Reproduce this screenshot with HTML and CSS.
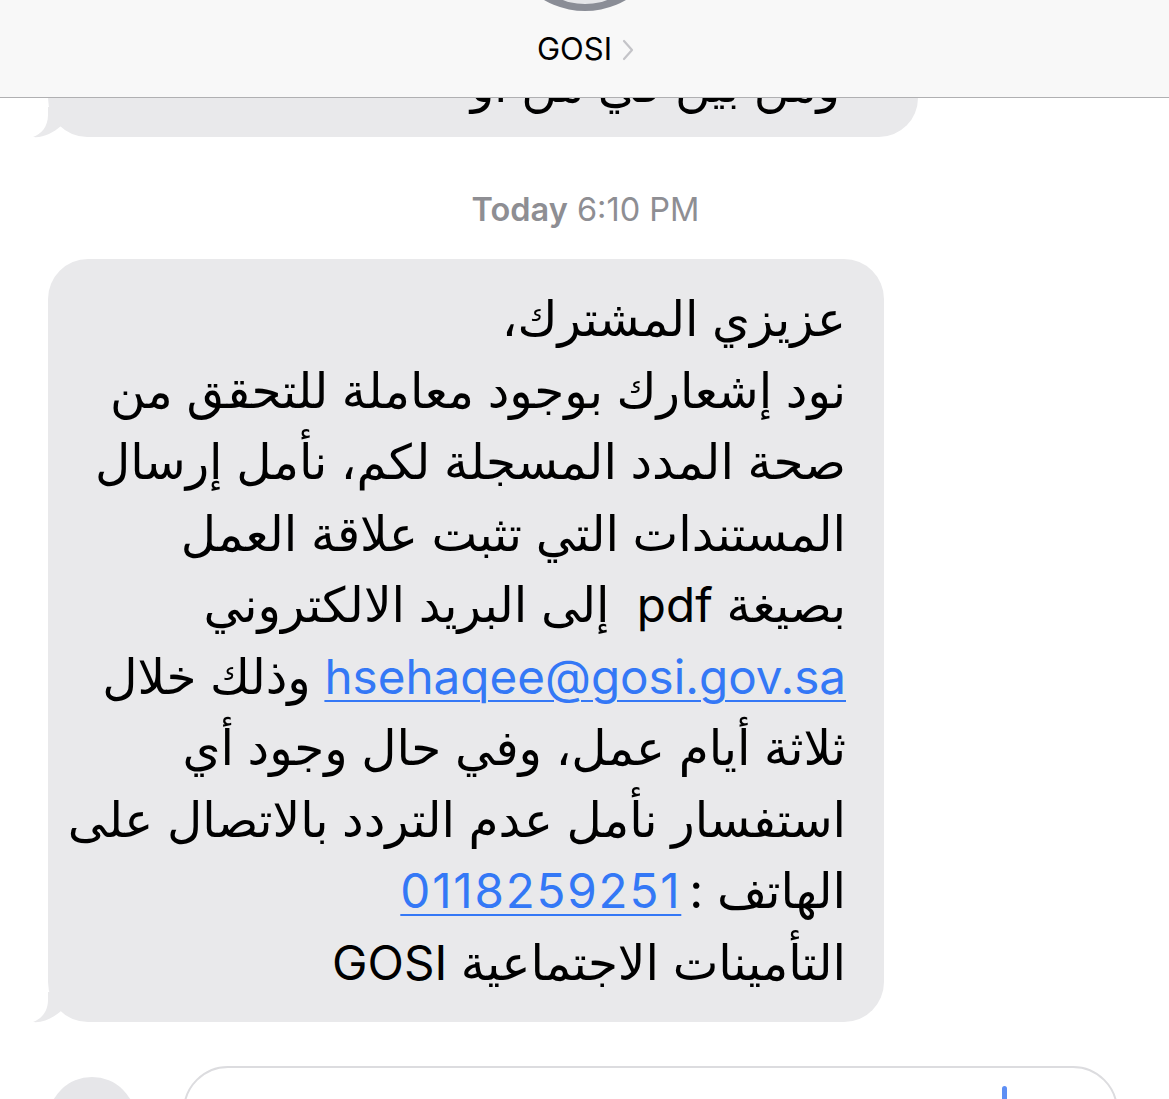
FILE: index.html
```html
<!DOCTYPE html>
<html lang="ar">
<head>
<meta charset="utf-8">
<title>GOSI</title>
<link rel="stylesheet" href="styles.css">
</head>
<body>
<div class="screen">
  <div class="header">
    <svg class="avatar" width="170" height="12" viewBox="0 0 170 12">
      <circle cx="85" cy="-71" r="82" fill="#8a8d96"/>
      <ellipse cx="85" cy="-20" rx="40" ry="24" fill="#e4e5e8"/>
    </svg>
    <div class="name">GOSI<span class="chev">
      <svg width="12" height="22" viewBox="0 0 12 22"><path d="M2,2 L10,11 L2,20" fill="none" stroke="#c4c4c8" stroke-width="2.2" stroke-linecap="round" stroke-linejoin="round"/></svg>
    </span></div>
  </div>
  <div class="thread">
    <div class="bubble prev">
      <div class="clip"><div class="line">ومن بين في من أو</div></div>
      <svg class="tail" width="30" height="30" viewBox="0 0 30 30"><path d="M15,0 L15,8 C15,20 8,27 0,30 C10,31 20,26 28,19 L28,0 Z" fill="#e9e9eb"/></svg>
    </div>
    <div class="stamp"><b>Today</b> 6:10 PM</div>
    <div class="bubble main">
      <div class="line">عزيزي المشترك،</div>
      <div class="line">نود إشعارك بوجود معاملة للتحقق من</div>
      <div class="line">صحة المدد المسجلة لكم، نأمل إرسال</div>
      <div class="line">المستندات التي تثبت علاقة العمل</div>
      <div class="line">بصيغة <span class="lat">pdf</span>&nbsp; إلى البريد الالكتروني</div>
      <div class="line"><a class="link lat" href="#">hsehaqee@gosi.gov.sa</a> وذلك خلال</div>
      <div class="line">ثلاثة أيام عمل، وفي حال وجود أي</div>
      <div class="line">استفسار نأمل عدم التردد بالاتصال على</div>
      <div class="line">الهاتف :<span class="gap"></span><a class="link lat num" href="#">0118259251</a></div>
      <div class="line">التأمينات الاجتماعية <span class="lat">GOSI</span></div>
      <svg class="tail" width="30" height="30" viewBox="0 0 30 30"><path d="M15,0 L15,8 C15,20 8,27 0,30 C10,31 20,26 28,19 L28,0 Z" fill="#e9e9eb"/></svg>
    </div>
    <div class="composer">
      <div class="apps"></div>
      <div class="field"><span class="cursor"></span></div>
    </div>
  </div>
</div>
</body>
</html>
```
FILE: styles.css
```css
html, body {
  margin: 0;
  padding: 0;
  background: #ffffff;
}
.screen {
  position: relative;
  width: 1169px;
  height: 1099px;
  overflow: hidden;
  font-family: "Inter", "DejaVu Sans", sans-serif;
  color: #000;
}
.thread {
  display: flex;
  flex-direction: column;
  align-items: flex-start;
}
.bubble {
  position: relative;
  margin-left: 48px;
  background: #e9e9eb;
  border-radius: 40px;
  direction: rtl;
  text-align: right;
  font-size: 48.5px;
  line-height: 71.5px;
  box-sizing: border-box;
}
.line {
  white-space: nowrap;
}
.bubble .tail {
  position: absolute;
  left: -15px;
  bottom: 0;
  overflow: visible;
}
.prev {
  width: 870px;
  height: 39px;
  padding: 0 78px 0 40px;
  border-top-left-radius: 0;
  border-top-right-radius: 0;
}
.clip {
  height: 39px;
  overflow: hidden;
}
.clip .line {
  margin-top: -49px;
}
.main {
  width: 836px;
  padding: 24px 38px 24px 20px;
}
.lat {
  font-family: "Inter", sans-serif;
  font-size: 47.6px;
}
.gap {
  display: inline-block;
  width: 9px;
}
.num {
  display: inline-block;
  letter-spacing: 1.8px;
  margin-right: -1px;
}
.link {
  color: #3478f6;
  text-decoration: underline;
  text-decoration-thickness: 2px;
  text-underline-offset: 6px;
}
.stamp {
  align-self: center;
  margin-top: 54px;
  margin-bottom: 30px;
  font-size: 32.5px;
  line-height: 38px;
  color: #8e8e93;
  padding-left: 2px;
}
.stamp b {
  font-weight: 600;
}
.composer {
  display: flex;
  align-items: flex-start;
  gap: 47px;
  margin-top: 44px;
  padding-left: 48px;
}
.apps {
  width: 88px;
  height: 88px;
  margin-top: 11px;
  border-radius: 50%;
  background: #e6e6e9;
}
.field {
  position: relative;
  width: 935px;
  height: 90px;
  box-sizing: border-box;
  border: 2px solid #dcdcdf;
  border-radius: 48px;
  background: #fff;
}
.cursor {
  position: absolute;
  left: 817px;
  top: 18px;
  width: 5px;
  height: 40px;
  border-radius: 3px;
  background: #5e8ff4;
}
.header {
  height: 97px;
  background: #f8f8f8;
  border-bottom: 1px solid #b0b0b2;
  display: flex;
  flex-direction: column;
  align-items: center;
}
.avatar {
  display: block;
}
.name {
  margin-top: 16px;
  font-size: 31px;
  line-height: 42px;
  display: flex;
  align-items: center;
  gap: 10px;
  padding-left: 2px;
  color: #000;
}
.chev {
  display: flex;
  align-items: center;
  padding-top: 2px;
}
```
